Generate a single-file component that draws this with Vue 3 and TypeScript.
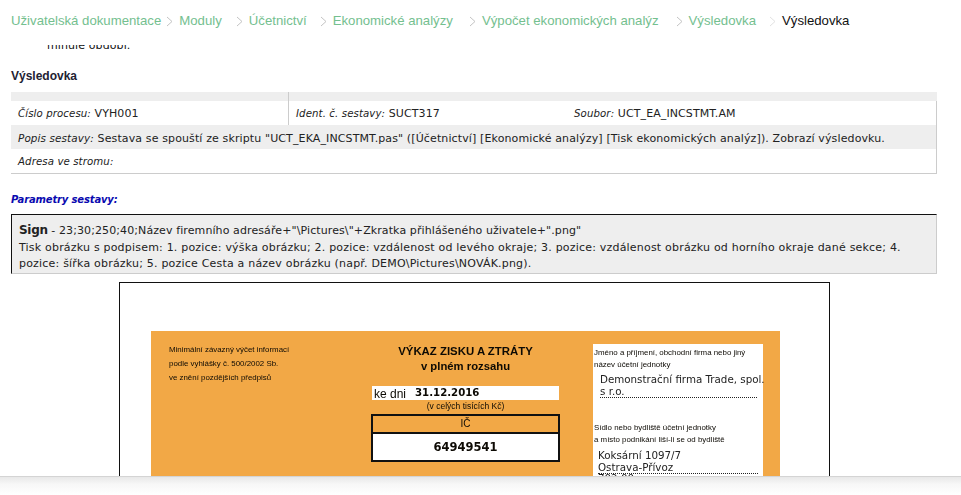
<script setup lang="ts">
interface Crumb { label: string; extra: number; current?: boolean }
const crumbs: Crumb[] = [
  { label: 'Uživatelská dokumentace', extra: 0 },
  { label: 'Moduly', extra: -1 },
  { label: 'Účetnictví', extra: 8 },
  { label: 'Ekonomické analýzy', extra: 7 },
  { label: 'Výpočet ekonomických analýz', extra: 10 },
  { label: 'Výsledovka', extra: 11 },
  { label: 'Výsledovka', extra: 7, current: true }
]
</script>

<template>
  <div class="page">
    <nav class="crumbs">
      <template v-for="(c, i) in crumbs" :key="i">
        <svg v-if="i > 0" class="sep" :class="{ faint: c.current }" :style="{ marginLeft: c.extra + 'px' }" width="7" height="11" viewBox="0 0 7 11">
          <path d="M1 1l5 4.5L1 10" fill="none" stroke="currentColor" stroke-width="1" />
        </svg>
        <span class="crumb" :class="{ current: c.current }">{{ c.label }}</span>
      </template>
    </nav>

    <div class="clipped"><span>minulé období.</span></div>

    <main class="content">
      <h2 class="title">Výsledovka</h2>

      <section class="info">
        <div class="row head">
          <div class="cell first"></div>
          <div class="cell rest"></div>
        </div>
        <div class="row triple">
          <div class="cell first"><i>Číslo procesu:</i> VYH001</div>
          <div class="cell second"><i>Ident. č. sestavy:</i> SUCT317</div>
          <div class="cell third"><i>Soubor:</i> UCT_EA_INCSTMT.AM</div>
        </div>
        <div class="row grey">
          <i>Popis sestavy:</i>&nbsp;Sestava se spouští ze skriptu "UCT_EKA_INCSTMT.pas" ([Účetnictví] [Ekonomické analýzy] [Tisk ekonomických analýz]). Zobrazí výsledovku.
        </div>
        <div class="row plain"><i>Adresa ve stromu:</i></div>
      </section>

      <h3 class="params">Parametry sestavy:</h3>

      <section class="param">
        <div><b class="name">Sign</b> - 23;30;250;40;Název firemního adresáře+"\Pictures\"+Zkratka přihlášeného uživatele+".png"</div>
        <div class="desc">Tisk obrázku s podpisem: 1. pozice: výška obrázku; 2. pozice: vzdálenost od levého okraje; 3. pozice: vzdálenost obrázku od horního okraje dané sekce; 4. pozice: šířka obrázku; 5. pozice Cesta a název obrázku (např. DEMO\Pictures\NOVÁK.png).</div>
      </section>

      <figure class="frame">
        <div class="form">
          <div class="legal">
            <div>Minimální závazný výčet informací</div>
            <div>podle vyhlášky č. 500/2002 Sb.</div>
            <div>ve znění pozdějších předpisů</div>
          </div>
          <div class="center">
            <div class="form-title">VÝKAZ ZISKU A ZTRÁTY</div>
            <div class="form-sub">v plném rozsahu</div>
            <div class="date"><span class="ke">ke dni</span><b>31.12.2016</b></div>
            <div class="units">(v celých tisících Kč)</div>
            <div class="ic">
              <div class="ic-label">IČ</div>
              <div class="ic-value">64949541</div>
            </div>
          </div>
          <div class="firm">
            <div class="small">Jméno a příjmení, obchodní firma nebo jiný<br />název účetní jednotky</div>
            <div class="filled dotted">Demonstrační firma Trade, spol.<br />s r.o.</div>
            <div class="small second-block">Sídlo nebo bydliště účetní jednotky<br />a místo podnikání liší-li se od bydliště</div>
            <div class="filled addr">Koksární 1097/7<br /><span class="dotline">Ostrava-Přívoz</span>702 00</div>
          </div>
        </div>
      </figure>
    </main>

    <div class="bottom-bar"></div>
  </div>
</template>

<style>
html, body { margin: 0; background: #fff; overflow: hidden; }
</style>

<style scoped>
.page {
  position: relative;
  height: 495px;
  overflow: hidden;
  background: #fff;
  font-family: "DejaVu Sans", Verdana, sans-serif;
  font-size: 11px;
  letter-spacing: 0.1px;
  color: #222;
}
.crumbs {
  display: flex;
  align-items: center;
  gap: 6px;
  height: 14px;
  padding: 13px 0 0 11px;
  font-family: "Liberation Sans", Arial, sans-serif;
  font-size: 13.2px;
  letter-spacing: 0;
  color: #74c08f;
  white-space: nowrap;
}
.sep { color: #c4c4c4; flex: none; margin-top: 2px; }
.sep.faint { color: #e2e2e2; }
.crumb.current { color: #111; }
.clipped {
  height: 7px;
  margin-top: 18px;
  overflow: hidden;
  display: flex;
  align-items: flex-end;
  padding-left: 47px;
  color: #111;
}
.clipped span { display: block; flex: none; line-height: 12px; }
.content { padding: 0 24px 0 11px; }
.title {
  margin: 16px 0 0;
  height: 24px;
  line-height: 16px;
  font-family: "Liberation Sans", Arial, sans-serif;
  font-size: 12px;
  letter-spacing: 0;
  font-weight: bold;
  color: #223;
}
.info { border-bottom: 1px solid #ccc; border-right: 1px solid #ccc; height: 81px; }
.row { box-sizing: border-box; padding-left: 7px; line-height: 26px; height: 24px; white-space: nowrap; }
.row.head { height: 9px; background: #eee; display: flex; padding: 0; margin-right: -1px; }
.row.triple { display: flex; padding: 0; }
.cell.first { width: 278px; box-sizing: border-box; padding-left: 7px; border-right: 1px solid #ccc; flex: none; }
.cell.second { width: 285px; padding-left: 7px; box-sizing: border-box; flex: none; }
.row.grey { background: #eee; letter-spacing: 0.12px; }
.row.grey i { font-size: 10.4px; }
i { font-style: italic; font-size: 10.2px; }
.params {
  margin: 20px 0 0;
  height: 20px;
  line-height: 12px;
  font-size: 10px;
  letter-spacing: -0.15px;
  font-style: italic;
  font-weight: bold;
  color: #0a0ab0;
}
.param {
  box-sizing: border-box;
  height: 60px;
  padding: 7px 28px 0 7px;
  background: #eee;
  border-top: 1px solid #111;
  border-left: 1px solid #111;
  border-right: 1px solid #ccc;
  border-bottom: 1px solid #ccc;
  line-height: 16.5px;
}
.desc { letter-spacing: 0.2px; }
.name { font-size: 12px; letter-spacing: -0.3px; font-weight: bold; }
.frame {
  box-sizing: border-box;
  width: 711px;
  height: 220px;
  margin: 8px 0 0 108px;
  padding: 48px 49px 0 31px;
  border: 1px solid #111;
  border-bottom: none;
}
.form {
  display: flex;
  height: 180px;
  background: #f2a846;
  color: #0d0a04;
  font-family: "Liberation Sans", Arial, sans-serif;
  letter-spacing: 0;
  overflow: hidden;
  filter: blur(0.35px);
}
.legal {
  width: 220px;
  box-sizing: border-box;
  padding: 12px 0 0 18px;
  font-size: 7.9px;
  line-height: 14px;
  white-space: nowrap;
  flex: none;
}
.center { width: 189px; flex: none; text-align: center; }
.form-title { margin-top: 13px; font-size: 11.4px; font-weight: bold; line-height: 15px; }
.form-sub { font-size: 11.3px; font-weight: bold; line-height: 15px; }
.date {
  display: flex;
  align-items: center;
  height: 14px;
  margin: 12px 1px 0;
  background: #fff;
  text-align: left;
  font-size: 12px;
  white-space: nowrap;
}
.ke { padding-left: 2px; width: 41px; flex: none; margin-top: 1px; }
.date b { font-family: "DejaVu Sans", sans-serif; font-size: 10.2px; margin-top: -2px; }
.units { font-size: 8.5px; line-height: 12px; }
.ic { box-sizing: border-box; height: 48px; margin-top: 2px; border: 2px solid #111; }
.ic-label { height: 16px; line-height: 16px; font-size: 10px; border-bottom: 2px solid #111; }
.ic-value {
  height: 26px;
  line-height: 26px;
  background: #fff;
  font-family: "DejaVu Sans", sans-serif;
  font-size: 11.5px;
  font-weight: bold;
}
.firm {
  width: 170px;
  margin: 13px 0 0 33px;
  padding: 3px 0 0 1px;
  box-sizing: border-box;
  background: #fff;
  flex: none;
}
.small { font-size: 7.9px; line-height: 12px; white-space: nowrap; }
.filled { font-family: "DejaVu Sans", sans-serif; font-size: 10.3px; line-height: 12px; padding-left: 3px; white-space: nowrap; color: #222; }
.dotted { border-bottom: 1px dotted #222; margin: 3px 6px 0 6px; padding-left: 0; line-height: 11.5px; }
.second-block { margin-top: 24px; }
.addr { margin-top: 4px; line-height: 11.5px; padding-left: 4px; }
.dotline { display: block; border-bottom: 1px dotted #222; margin-right: 5px; margin-bottom: -1px; }
.bottom-bar {
  position: absolute;
  left: 0;
  right: 0;
  bottom: 0;
  height: 19px;
  background: linear-gradient(#e8e8e8, #f7f7f7 40%, #fff);
  border-top: 1px solid #d4d4d4;
  box-sizing: border-box;
}
</style>
